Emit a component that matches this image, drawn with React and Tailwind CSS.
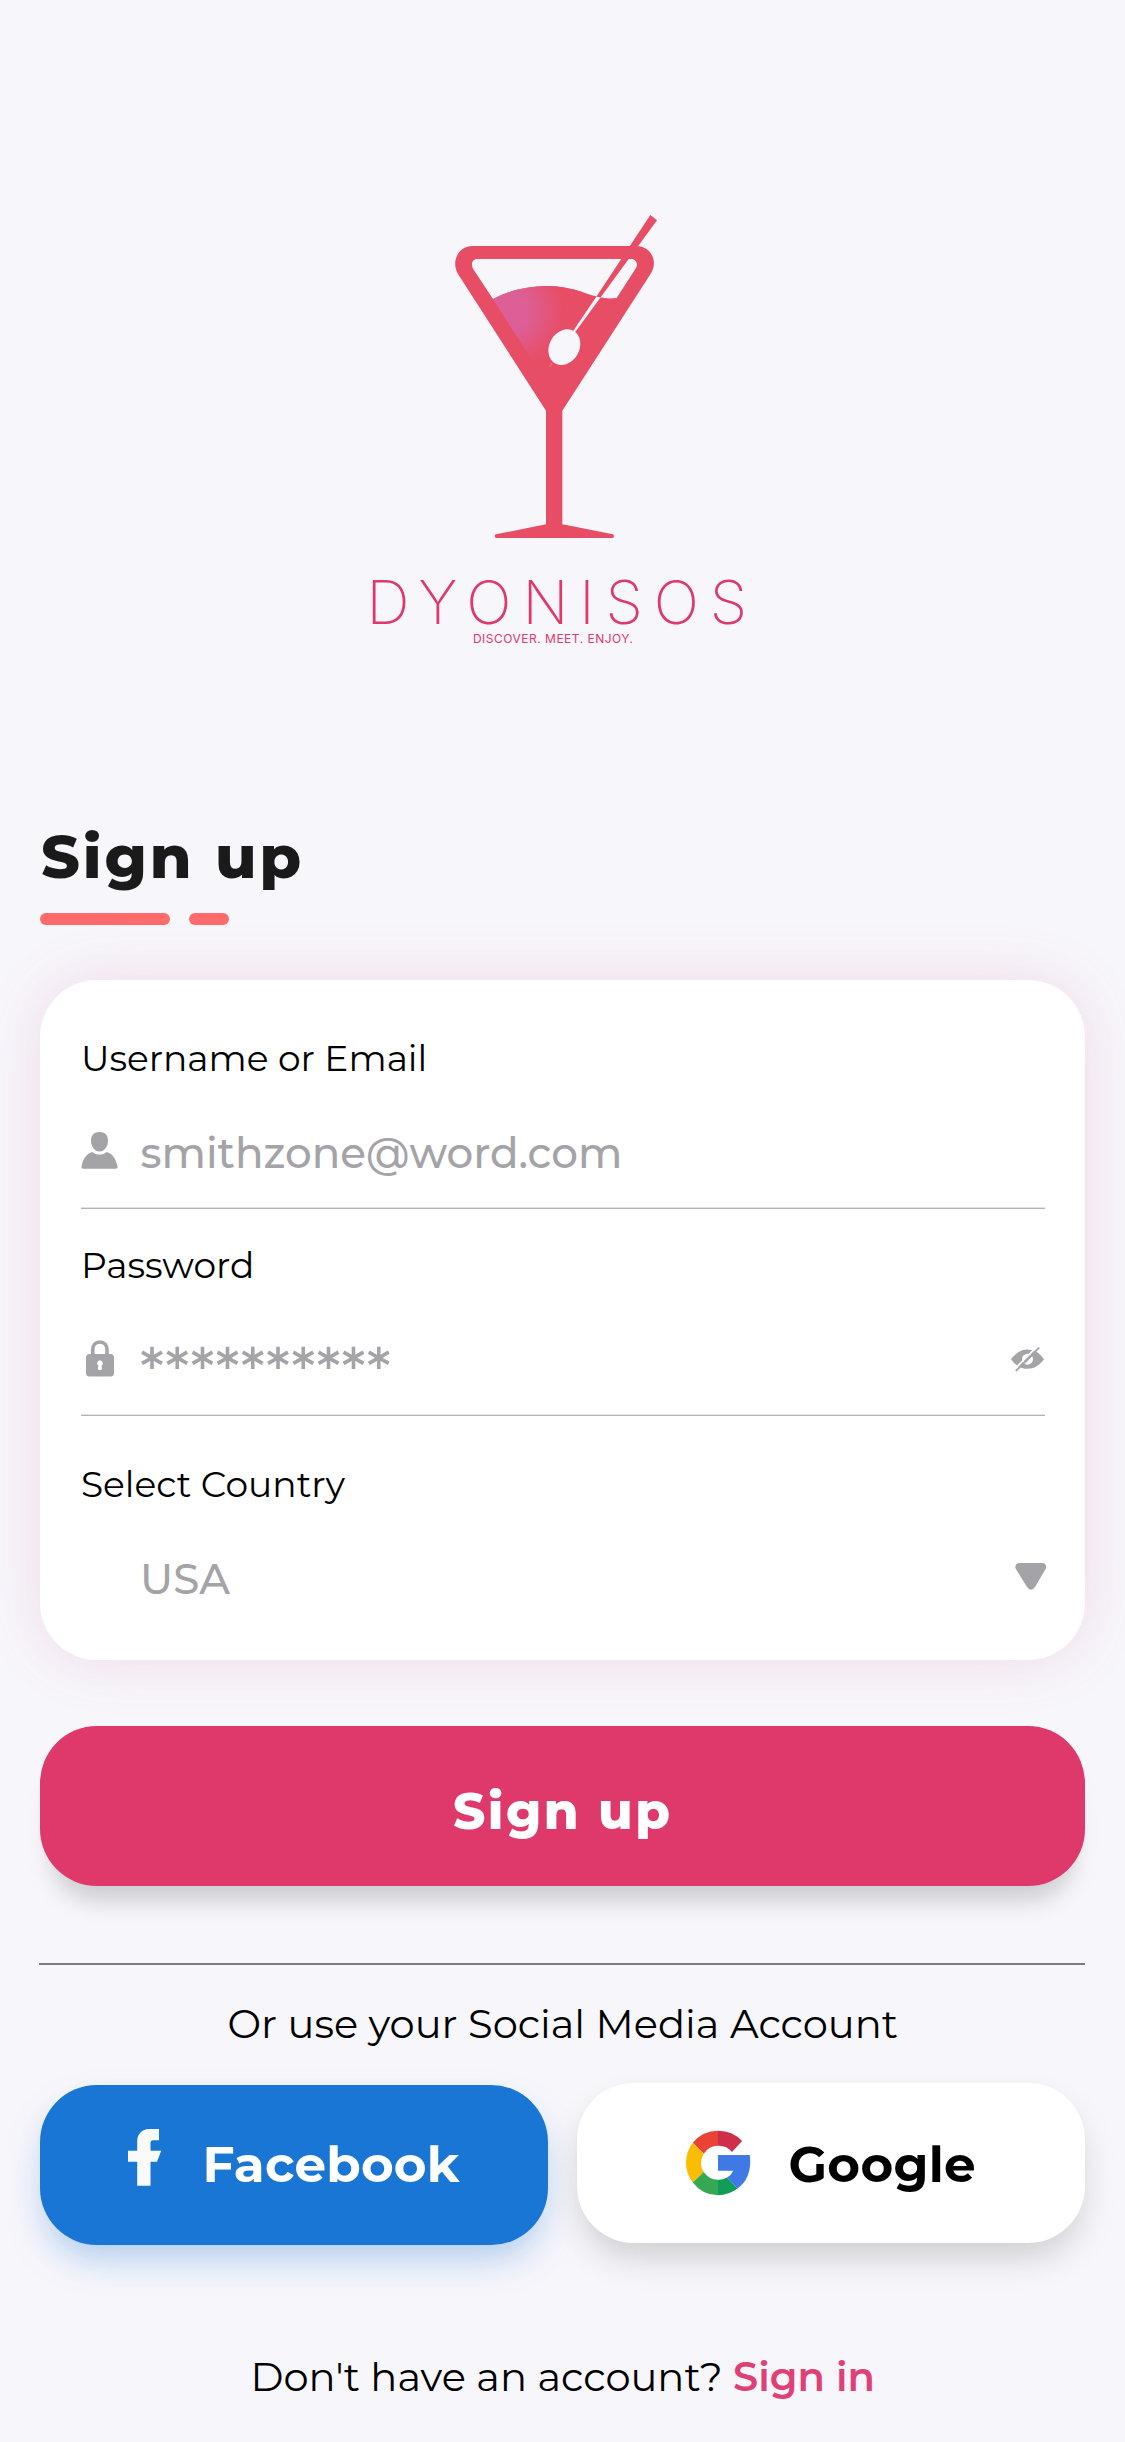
function CocktailLogo() {
  return (
    <svg className="ml-[389.5px] shrink-0" width="250" height="350" viewBox="0 0 750 1050">
      <defs>
        <radialGradient id="liquid" gradientUnits="userSpaceOnUse" cx="230" cy="335" r="172">
          <stop offset="0" stopColor="#dd5f99" />
          <stop offset="0.35" stopColor="#dd5f97" />
          <stop offset="1" stopColor="#e84d66" />
        </radialGradient>
      </defs>
      <path
        fill="#e84d66"
        fillRule="evenodd"
        d="M127 138H620C661 138 686 182 663 220L397 632V973L549 1003Q552 1004 552 1009Q552 1014 547 1014H199Q194 1014 194 1009Q194 1004 198 1003L348 973V632L84 222C62 185 85 138 127 138ZM142 177C127 177 122 192 129 206L189 297Q265 258 350 258Q400 258 455 275Q485 287 510 292Q530 297 560 294L618 204C625 192 618 177 604 177Z"
      />
      <path fill="url(#liquid)" d="M189 297Q265 258 350 258Q400 258 455 275L372 585Z" />
      <path fill="#e84d66" d="M661 45L681 61L512 292L499 290Z" />
      <path fill="#f7f6fb" d="M499 290L512 292L434 398L429 394Z" />
      <ellipse cx="403" cy="441.500" rx="45" ry="56" transform="rotate(30 403 441.500)" fill="#f7f6fb" />
      <path d="M366 489L358 501" stroke="#ee8d9c" strokeWidth="2" />
    </svg>
  );
}

function UserIcon() {
  return (
    <svg className="mt-[5px] shrink-0" width="37" height="37" viewBox="0 0 37 37" fill="#a4a3a8">
      <path d="M18.500 0C24 0 27 3 27 8.500C27 14.500 23.500 19.500 18.500 19.500S10 14.500 10 8.500C10 3 13 0 18.500 0Z" />
      <path d="M11.500 20C13.500 22 16 22.500 18.500 22.500S23.500 22 25.500 20C31.500 21.500 34.500 26 36.500 34.500Q37 36.700 34.500 36.700H2.500Q0 36.700 .5 34.500C2.500 26 5.500 21.500 11.500 20Z" />
    </svg>
  );
}

function LockIcon() {
  return (
    <svg className="ml-[5px] shrink-0" width="28" height="37" viewBox="0 0 28 37">
      <path d="M6.700 16V10C6.700 4.800 9.800 2 13.800 2S21 4.800 21 10V16" fill="none" stroke="#a4a3a8" strokeWidth="3.600" />
      <rect x="0" y="14" width="28" height="22.500" rx="3.500" fill="#a4a3a8" />
      <path d="M13.900 20.200A3.100 3.100 0 0 1 15.500 25.800L16 29Q16 30 13.900 30T11.800 29L12.400 25.800A3.100 3.100 0 0 1 13.900 20.200Z" fill="#fff" />
    </svg>
  );
}

function EyeOffIcon() {
  return (
    <svg className="mt-[7px] ml-auto shrink-0" width="34" height="25" viewBox="0 0 34 25">
      <path d="M0 12.300C4.500 6 10 2.600 16.500 2.600S28.500 6 33 12.300C28.500 18.500 23 21.800 16.500 21.800S4.500 18.500 0 12.300Z" fill="#a4a3a8" />
      <circle cx="16.500" cy="12.200" r="5.500" fill="#fff" />
      <path d="M13.500 14.500L19.500 8" stroke="#a4a3a8" strokeWidth="4" />
      <path d="M3.200 22.500L26.600 -1" stroke="#fff" strokeWidth="1.800" />
      <path d="M4.800 24L28.200 .5" stroke="#a4a3a8" strokeWidth="1.800" />
    </svg>
  );
}

function FacebookIcon() {
  return (
    <svg className="mt-[43.5px] ml-[87.5px] shrink-0" width="34" height="57" viewBox="0 0 34 57">
      <path fill="#fafafa" d="M9.200 56.700V32.700H0V21.700H9.200V12C9.200 5 14 0 21 0H31V11.300H25Q22.500 11.300 22.500 14V21.700H33.200L29 32.700H22.500V56.700Z" />
    </svg>
  );
}

function GoogleIcon() {
  return (
    <svg className="mt-[47px] ml-[108px] shrink-0" width="66" height="66" viewBox="-33 -33 66 66">
      <path fill="#ea4335" d="M-25.200 -20.200A32.300 32.300 0 0 1 0 -32.300V-17.200A17 17 0 0 0 -14.200 -9.200Z" />
      <path fill="#d02f4b" d="M0 -32.300A32.300 32.300 0 0 1 24.100 -22L14 -11A17 17 0 0 0 0 -17.200Z" />
      <path fill="#fbbc05" d="M-25.200 -20.200A32.300 32.300 0 0 0 -25.200 19.500L-14.200 9A17 17 0 0 1 -14.200 -9.200Z" />
      <path fill="#34a853" d="M-25.200 19.500A32.300 32.300 0 0 0 0 32.300V16.800A17 17 0 0 1 -14.200 9Z" />
      <path fill="#0f9d58" d="M0 32.300A32.300 32.300 0 0 0 19.500 25.600L9 14.600A17 17 0 0 1 0 16.800Z" />
      <path fill="#3e79e6" d="M0 -8H31.800C33.500 6 30 18 19.500 25.600L9 14.600Q13.500 12 15.200 7.700H0Z" />
    </svg>
  );
}

function Rule() {
  return <div className="h-[2px] shrink-0 border-t border-b border-t-[#e3e3e3] border-b-[#b4b4b6]" />;
}

export default function App() {
  return (
    <main className="flex h-[2442px] w-[1125px] flex-col overflow-hidden bg-[#f7f6fb] pt-[200px] pr-10 pl-[40.4px] font-['Montserrat','Inter',sans-serif] text-black whitespace-nowrap">
      <CocktailLogo />
      <p className="mt-[22px] ml-[326px] font-['Inter',sans-serif] text-[60px] leading-[60px] font-extralight tracking-[10.9px] text-[#df386b]">DYONISOS</p>
      <p className="ml-[432.5px] font-['Inter',sans-serif] text-[12px] leading-[14px] tracking-[0.5px] text-[#df386b]">DISCOVER. MEET. ENJOY.</p>

      <h1 className="mt-[175px] ml-[0.5px] text-[60px] leading-[72px] font-extrabold tracking-[3px] text-[#1a1a1a]">Sign up</h1>
      <div className="mt-5 flex gap-[19px]">
        <span className="h-3 w-[129.5px] rounded-full bg-[#ff6b6b]" />
        <span className="h-3 w-10 rounded-full bg-[#ff6b6b]" />
      </div>

      <section className="mt-[55px] flex h-[680px] shrink-0 flex-col rounded-[57px] bg-white pt-14 pr-10 pl-[40.6px] shadow-[0_0_60px_rgba(205,60,120,0.14)]">
        <label className="text-[36px] leading-[44px]">Username or Email</label>
        <div className="mt-[47px] flex h-[52px] text-[42px] leading-[52px] font-medium text-[#a4a3a8]">
          <UserIcon />
          <span className="ml-[22.5px]">smithzone@word.com</span>
        </div>
        <div className="mt-7"><Rule /></div>

        <label className="mt-[34px] text-[36px] leading-[44px]">Password</label>
        <div className="mt-[53px] flex h-[60px] text-[60px] leading-[60px] font-medium text-[#a4a3a8]">
          <LockIcon />
          <span className="ml-[26px]">**********</span>
          <EyeOffIcon />
        </div>
        <div className="mt-[14px]"><Rule /></div>

        <label className="mt-[46px] text-[36px] leading-[44px]">Select Country</label>
        <div className="mt-[47px] flex h-[52px] text-[42px] leading-[52px] font-medium text-[#a4a3a8]">
          <span className="ml-[59px]">USA</span>
          <svg className="mt-[10px] -mr-[2px] ml-auto shrink-0" width="32" height="28" viewBox="0 0 32 28">
            <path fill="#a4a3a8" d="M4.500 0H27.500Q31 .3 31.200 4Q31 6 30 7L20 24Q16 29.500 12 24L1.500 7Q.5 6 .3 4Q.5 .3 4.500 0Z" />
          </svg>
        </div>
      </section>

      <button className="mt-[65.5px] h-40 shrink-0 rounded-[57px] bg-[#df386b] pt-[13px] text-[50px] leading-none font-extrabold tracking-[2.5px] text-white shadow-[0_26px_24px_-12px_rgba(0,0,0,0.18)]">Sign up</button>

      <div className="mt-[77.5px] -ml-[1.4px] h-[2px] shrink-0 bg-[#7d7c81]" />
      <p className="mt-[34px] text-center text-[40px] leading-[50px]">Or use your Social Media Account</p>

      <div className="mt-[34px] flex shrink-0 gap-[28.6px]">
        <button className="mt-[2.4px] flex h-40 w-[508px] rounded-[57px] bg-[#1976d4] text-[50px] leading-[60px] font-bold tracking-[0.2px] text-white shadow-[0_18px_36px_-6px_rgba(25,118,212,0.34)]">
          <FacebookIcon />
          <span className="mt-[50px] ml-[40.5px]">Facebook</span>
        </button>
        <button className="flex h-40 w-[508px] rounded-[57px] bg-white text-[50px] leading-[60px] font-bold tracking-[0.3px] shadow-[0_18px_36px_-6px_rgba(0,0,0,0.18)]">
          <GoogleIcon />
          <span className="mt-[52px] ml-[37.5px]">Google</span>
        </button>
      </div>

      <p className="mt-[106.6px] text-center text-[40px] leading-[50px]">
        Don't have an account? <a className="font-semibold text-[#df4075]">Sign in</a>
      </p>
    </main>
  );
}
